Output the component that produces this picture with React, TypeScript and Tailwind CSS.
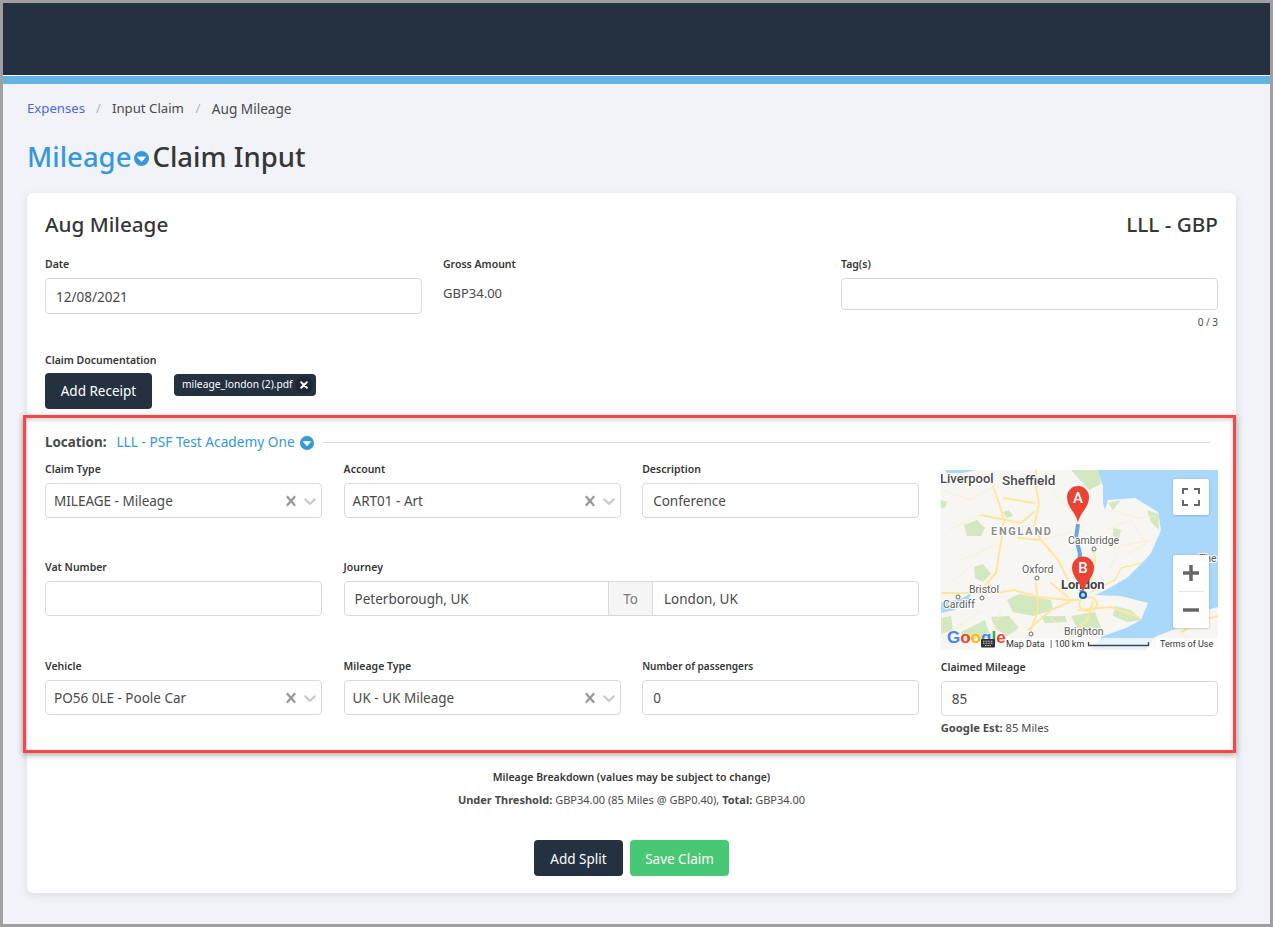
import React from "react";

const Cross = () => (
  <svg viewBox="0 0 20 20" className="w-5 h-5 fill-[#999999] -mr-[1px]">
    <path d="M14.348 14.849c-0.469 0.469-1.229 0.469-1.697 0l-2.651-3.030-2.651 3.029c-0.469 0.469-1.229 0.469-1.697 0-0.469-0.469-0.469-1.229 0-1.697l2.758-3.15-2.759-3.152c-0.469-0.469-0.469-1.228 0-1.697s1.228-0.469 1.697 0l2.652 3.031 2.651-3.031c0.469-0.469 1.228-0.469 1.697 0s0.469 1.229 0 1.697l-2.758 3.152 2.758 3.15c0.469 0.469 0.469 1.229 0 1.698z" />
  </svg>
);
const Chevron = () => (
  <svg viewBox="0 0 20 20" className="w-5 h-5 fill-[#cccccc]">
    <path d="M4.516 7.548c0.436-0.446 1.043-0.481 1.576 0l3.908 3.747 3.908-3.747c0.533-0.481 1.141-0.446 1.574 0 0.436 0.445 0.408 1.197 0 1.615-0.406 0.418-4.695 4.502-4.695 4.502-0.217 0.223-0.502 0.335-0.787 0.335s-0.57-0.112-0.789-0.335c0 0-4.287-4.084-4.695-4.502s-0.436-1.17 0-1.615z" />
  </svg>
);
const Caret = ({ size }: { size: string }) => (
  <svg viewBox="0 0 16 16" className={size}>
    <circle cx="8" cy="8" r="8" fill="#3498db" />
    <path d="M3.6 6.300h8.800L8 11.200z" fill="#ffffff" stroke="#ffffff" strokeWidth="0.8" strokeLinejoin="round" />
  </svg>
);

const Label = ({ children, cls = "text-[10.5px]" }: { children: React.ReactNode; cls?: string }) => (
  <div className={`${cls} font-semibold leading-[14px] text-[#363636] mb-[7px]`}>{children}</div>
);
const Box = ({ children, h = "h-[35px]" }: { children?: React.ReactNode; h?: string }) => (
  <div className={`${h} bg-white border border-[#d9d9d9] rounded-[4px] flex items-center px-[10px] pt-[2px] text-[13.5px] text-[#4a4a4a]`}>{children}</div>
);
const Select = ({ label, value }: { label: string; value: string }) => (
  <div>
    <Label>{label}</Label>
    <div className="h-[35px] bg-white border border-[#d9d9d9] rounded-[4px] flex items-center pl-[8px] pr-[1px] text-[13.5px] text-[#4a4a4a]">
      <span className="flex-1 pt-[2px]">{value}</span>
      <Cross />
      <Chevron />
    </div>
  </div>
);

const MapPicture = () => (
  <svg viewBox="0 0 277 180" className="w-[277px] h-[180px] block" style={{ fontFamily: "Roboto, sans-serif" }}>
    <defs>
      <filter id="btn" x="-20%" y="-20%" width="140%" height="140%">
        <feDropShadow dx="0" dy="0.5" stdDeviation="0.8" floodOpacity="0.25" />
      </filter>
    </defs>
    <rect width="277" height="180" fill="#f7f6f2" />
    <g fill="#d3e8bf">
      <path d="M23 55 L36 50 L44 58 L40 66 L26 66 Z" />
      <path d="M62 42 L68 40 L72 46 L66 48 Z" />
      <path d="M33 97 L42 94 L50 104 L42 112 L34 108 Z" />
      <path d="M66 130 L78 124 L110 130 L112 140 L92 146 L72 142 Z" />
      <path d="M50 147 L68 146 L78 158 L66 166 L54 158 Z" />
      <path d="M100 146 L124 146 L126 152 L104 153 Z" />
      <path d="M0 148 L10 146 L12 160 L0 164 Z" />
      <path d="M174 136 L190 140 L201 150 L186 152 L172 146 Z" />
      <path d="M20 162 L44 150 L50 168 L24 170 Z" />
      <path d="M130 146 L154 142 L160 158 L138 162 Z" />
      <path d="M130 0 L158 0 L160 14 L148 20 Z" />
      <path d="M167 33 L180 30 L172 40 Z" />
      <path d="M206 40 L217 44 L218 60 L210 52 Z" />
      <path d="M172 58 L180 60 L178 68 L172 66 Z" />
      <path d="M0 30 L6 32 L4 38 L0 38 Z" />
    </g>
    <path d="M157 0 L162 17 L162 33 L164 40 L167 30 L194 28 L217 42 L220 60 L210 83 L204 90 L187 107 L165 120 L154 125 L180 126 L207 133 L200 150 L187 157 L160 167 L150 180 L205 180 L214 167 L237 158 L267 140 L277 137 L277 0 Z" fill="#aad8fb" />
    <path d="M0 132 L18 130 L30 123 L27 131 L14 140 L0 143 Z" fill="#aad8fb" />
    <path d="M4 0 L34 0 L22 3 L6 3 Z" fill="#aad8fb" />
    <path d="M214 180 L214 167 L237 158 L267 140 L277 137 L277 180 Z" fill="#f7f6f2" />
    <g fill="none" stroke="#fbeecb" strokeWidth="0.9">
      <path d="M0 20 L30 30 L52 17" />
      <path d="M8 60 L40 45" />
      <path d="M20 90 L48 78 L60 73" />
      <path d="M100 70 L140 60 L170 78 L210 70" />
      <path d="M110 20 L130 40 L138 60" />
      <path d="M170 40 L196 48 L214 46" />
      <path d="M165 60 L190 50 L205 74 L186 84" />
      <path d="M176 84 L168 100" />
      <path d="M120 90 L135 108" />
      <path d="M10 112 L30 96" />
      <path d="M60 140 L50 170" />
      <path d="M110 148 L130 168" />
      <path d="M0 170 L40 140" />
      <path d="M240 160 L250 178" />
    </g>
    <g fill="none" stroke="#fde7a0" strokeWidth="2" strokeLinejoin="round" strokeLinecap="round">
      <path d="M52 17 L58 33 L63 50 L60 73 L57 90 L55 103 L43 117" />
      <path d="M95 0 L95 17 L98 33 L93 57 L100 70 L117 90 L127 110" />
      <path d="M63 28 L93 33" />
      <path d="M40 45 L80 53 L93 42" />
      <path d="M77 68 L100 70" />
      <path d="M0 123 L20 123 L57 123 L73 120 L97 127 L127 130 L137 130" />
      <path d="M110 113 L127 127" />
      <path d="M95 113 L97 140 L90 160" />
      <path d="M87 160 L110 140 L133 130" />
      <path d="M137 140 L170 137 L197 147" />
      <path d="M150 110 L154 90 L152 80" />
      <path d="M152 132 L146 150 L130 166" />
      <path d="M240 162 L262 150 L277 146" />
      <path d="M150 122 L174 110 L180 98 L200 93" strokeWidth="1.4" />
      <path d="M147 134 m-9 0 a9 7 0 1 0 18 0 a9 7 0 1 0 -18 0" />
    </g>
    <path d="M137 54 L135 68 L139 84 L137 100 L140 118 L142 126" fill="none" stroke="#6aa5e6" strokeWidth="4" strokeLinejoin="round" />
    <circle cx="142" cy="125" r="3" fill="#cfe0f5" stroke="#1a62b5" strokeWidth="2.200" />
    <g fill="#5c5c5c" stroke="#ffffff" strokeWidth="2" paintOrder="stroke" strokeLinejoin="round">
      <text x="-1" y="13" fontSize="13" fontWeight="500" fill="#4a4a4a">Liverpool</text>
      <text x="61" y="15" fontSize="13.500" fontWeight="500" fill="#4a4a4a">Sheffield</text>
      <text x="50" y="65" fontSize="11" fontWeight="700" letterSpacing="1.700" fill="#8e8e8e">ENGLAND</text>
      <text x="127" y="74" fontSize="10.500">Cambridge</text>
      <text x="81" y="103" fontSize="10.500">Oxford</text>
      <text x="28" y="123" fontSize="10.500">Bristol</text>
      <text x="2" y="138" fontSize="10.500">Cardiff</text>
      <text x="120" y="119" fontSize="13" fontWeight="700" fill="#444444">London</text>
      <text x="123" y="165" fontSize="10.500">Brighton</text>
      <text x="258" y="92" fontSize="10.500">The</text>
    </g>
    <g fill="#ffffff" stroke="#666666" strokeWidth="1">
      <circle cx="153" cy="79" r="2" />
      <circle cx="96" cy="108" r="2" />
      <circle cx="17" cy="127" r="2" />
      <circle cx="41" cy="128" r="2" />
      <circle cx="90" cy="164" r="2" />
    </g>
    <path d="M137 53 C135 42 126 38 126 27 A11 11 0 0 1 148 27 C148 38 139 42 137 53 Z" fill="#ea4335" />
    <text x="137" y="33" textAnchor="middle" fontSize="15" fontWeight="500" fill="#ffffff">A</text>
    <path d="M142 123 C140 112 131 108 131 97.500 A11 11 0 0 1 153 97.500 C153 108 144 112 142 123 Z" fill="#ea4335" />
    <text x="142" y="103" textAnchor="middle" fontSize="15" fontWeight="500" fill="#ffffff">B</text>
    <rect x="232" y="9" width="36" height="36" rx="2" fill="#ffffff" filter="url(#btn)" />
    <path d="M242 24 V19 H247 M253 19 H258 V24 M258 30 V35 H253 M247 35 H242 V30" fill="none" stroke="#666666" strokeWidth="2" />
    <rect x="232" y="85" width="36" height="73" rx="2" fill="#ffffff" filter="url(#btn)" />
    <path d="M237 121.500 H263" stroke="#e6e6e6" strokeWidth="1" />
    <path d="M242 103 H258 M250 95 V111" stroke="#666666" strokeWidth="3.500" fill="none" />
    <path d="M242 140 H258" stroke="#666666" strokeWidth="3.500" fill="none" />
    <rect x="35" y="168" width="178" height="12" fill="#ffffff" opacity="0.72" />
    <rect x="214" y="168" width="63" height="12" fill="#ffffff" opacity="0.72" />
    <text x="6" y="173" fontSize="17" fontWeight="700" style={{ fontFamily: "'Liberation Sans', sans-serif" }}>
      <tspan fill="#4285f4">G</tspan><tspan fill="#ea4335">o</tspan><tspan fill="#fbbc05">o</tspan><tspan fill="#4285f4">g</tspan><tspan fill="#34a853">l</tspan><tspan fill="#ea4335">e</tspan>
    </text>
    <rect x="40" y="169" width="14" height="8.500" rx="1" fill="#333333" />
    <path d="M42 171.200 H52 M42 173.200 H52 M44 175.500 H50" stroke="#ffffff" strokeWidth="0.8" strokeDasharray="1 0.6" />
    <g fontSize="9" fill="#333333">
      <text x="65" y="177">Map Data</text>
      <text x="109" y="177">| 100 km</text>
      <text x="219" y="177">Terms of Use</text>
    </g>
    <path d="M147.500 172 V175.500 H207.500 V172" fill="none" stroke="#444444" strokeWidth="1.300" />
  </svg>
);

export default function App() {
  return (
    <div className="h-[927px] border-[3px] border-[#a0a0a0] bg-[#f1f3f9] font-['Noto_Sans',sans-serif] overflow-hidden">
      <div className="h-[72px] bg-[#233140]" />
      <div className="h-[1px] bg-white" />
      <div className="h-[8px] bg-[#62b4e5]" />
      <div className="pl-[24px] pr-[34px]">
        <div className="h-[48px] pt-[2px] flex items-center text-[13.2px] text-[#4a4a4a]">
          <span className="text-[#4a68e0]">Expenses</span>
          <span className="mx-[11px] text-[#b5b5b5]">/</span>
          <span>Input Claim</span>
          <span className="mx-[11.5px] text-[#b5b5b5]">/</span>
          <span className="text-[13.6px]">Aug Mileage</span>
        </div>
        <div className="h-[48px] mb-[13px] pt-[2px] flex items-center text-[27.5px] font-medium leading-none text-[#363636]">
          <span className="text-[#3498db]">Mileage</span>
          <span className="mt-[3px] ml-[3px] mr-[3px]"><Caret size="w-[15px] h-[15px]" /></span>
          <span>Claim Input</span>
        </div>
        <div className="bg-white rounded-[6px] shadow-[0_2px_10px_rgba(10,10,10,0.1)] h-[700px] px-[18px] pt-[18px]">
          <div className="flex justify-between items-center h-[27px] text-[20.7px] font-medium text-[#363636]">
            <span>Aug Mileage</span>
            <span>LLL - GBP</span>
          </div>
          <div className="grid grid-cols-3 gap-x-[21px] mt-[19px]">
            <div>
              <Label>Date</Label>
              <Box h="h-[36px]">12/08/2021</Box>
            </div>
            <div>
              <Label>Gross Amount</Label>
              <div className="text-[13px] text-[#4a4a4a] h-[32px] flex items-center">GBP34.00</div>
            </div>
            <div>
              <Label>Tag(s)</Label>
              <Box h="h-[32px]" />
              <div className="text-right text-[10px] leading-[14px] mt-[5px] text-[#4a4a4a]">0 / 3</div>
            </div>
          </div>
          <div className="mt-[24px]">
            <div className="text-[10.5px] font-semibold leading-[14px] text-[#363636]">Claim Documentation</div>
            <div className="flex items-start mt-[6px]">
              <button className="h-[36px] w-[107px] bg-[#233140] rounded-[4px] text-white text-[13.5px]">Add Receipt</button>
              <div className="ml-[22px] h-[22px] mt-[1px] bg-[#233140] rounded-[4px] text-white text-[10.25px] flex items-center pl-[8px] pr-[3px]">
                mileage_london (2).pdf
                <span className="w-[18px] h-[18px] ml-[2px] rounded-full bg-[#1c2834] flex items-center justify-center">
                  <svg viewBox="0 0 10 10" className="w-[8px] h-[8px]"><path d="M1.500 1.500 L8.500 8.500 M8.500 1.500 L1.500 8.500" stroke="#ffffff" strokeWidth="2.400" strokeLinecap="round" /></svg>
                </span>
              </div>
            </div>
          </div>
          <div className="-ml-[22px] -mr-[18px] mt-[6px] h-[338px] border-[3px] border-[#f44747] shadow-[0_2px_6px_rgba(0,0,0,0.35),inset_0_2px_5px_rgba(0,0,0,0.18)] pl-[19px] pr-[15px] pt-[16px]">
            <div className="flex items-center h-[17px]">
              <span className="text-[13.4px] font-bold text-[#4a4a4a]">Location:</span>
              <span className="ml-[10px] text-[13.7px] text-[#3498db]">LLL - PSF Test Academy One</span>
              <span className="ml-[5px]"><Caret size="w-[14px] h-[14px]" /></span>
              <div className="flex-1 h-[1px] bg-[#dbdbdb] ml-[9px] mr-[8px]" />
            </div>
            <div className="grid grid-cols-4 gap-x-[21.33px] mt-[11px]">
              <div className="col-span-3 grid grid-cols-3 gap-x-[21.33px] grid-rows-[98px_99px_auto]">
                <Select label="Claim Type" value="MILEAGE - Mileage" />
                <Select label="Account" value="ART01 - Art" />
                <div>
                  <Label>Description</Label>
                  <Box>Conference</Box>
                </div>
                <div>
                  <Label>Vat Number</Label>
                  <Box />
                </div>
                <div className="col-span-2">
                  <Label>Journey</Label>
                  <div className="flex h-[35px] border border-[#d9d9d9] rounded-[4px] text-[13.5px] text-[#4a4a4a]">
                    <div className="flex-1 flex items-center px-[10px] pt-[2px]">Peterborough, UK</div>
                    <div className="w-[45px] bg-[#f5f5f5] border-x border-[#d9d9d9] flex items-center justify-center pt-[2px] text-[#7a7a7a]">To</div>
                    <div className="flex-1 flex items-center px-[11px] pt-[2px]">London, UK</div>
                  </div>
                </div>
                <Select label="Vehicle" value="PO56 0LE - Poole Car" />
                <Select label="Mileage Type" value="UK - UK Mileage" />
                <div>
                  <Label cls="text-[10px]">Number of passengers</Label>
                  <Box>0</Box>
                </div>
              </div>
              <div>
                <div className="mt-[8px]"><MapPicture /></div>
                <div className="mt-[10px]">
                  <Label>Claimed Mileage</Label>
                  <Box h="h-[35px]">85</Box>
                  <div className="text-[11.2px] leading-[14px] mt-[5px] text-[#4a4a4a]"><b className="font-bold">Google Est:</b> 85 Miles</div>
                </div>
              </div>
            </div>
          </div>
          <div className="text-center text-[11px] text-[#4a4a4a] mt-[16px]">
            <div className="text-[10.5px] font-semibold text-[#363636] leading-[16px]">Mileage Breakdown (values may be subject to change)</div>
            <div className="leading-[16px] mt-[7px]"><b>Under Threshold:</b> GBP34.00 (85 Miles @ GBP0.40), <b>Total:</b> GBP34.00</div>
          </div>
          <div className="flex justify-center gap-[7px] mt-[32px]">
            <button className="h-[36px] w-[89px] pt-[2px] bg-[#233140] rounded-[4px] text-white text-[13.5px]">Add Split</button>
            <button className="h-[36px] w-[99px] pt-[2px] bg-[#48c774] rounded-[4px] text-white text-[13.5px]">Save Claim</button>
          </div>
        </div>
      </div>
    </div>
  );
}
